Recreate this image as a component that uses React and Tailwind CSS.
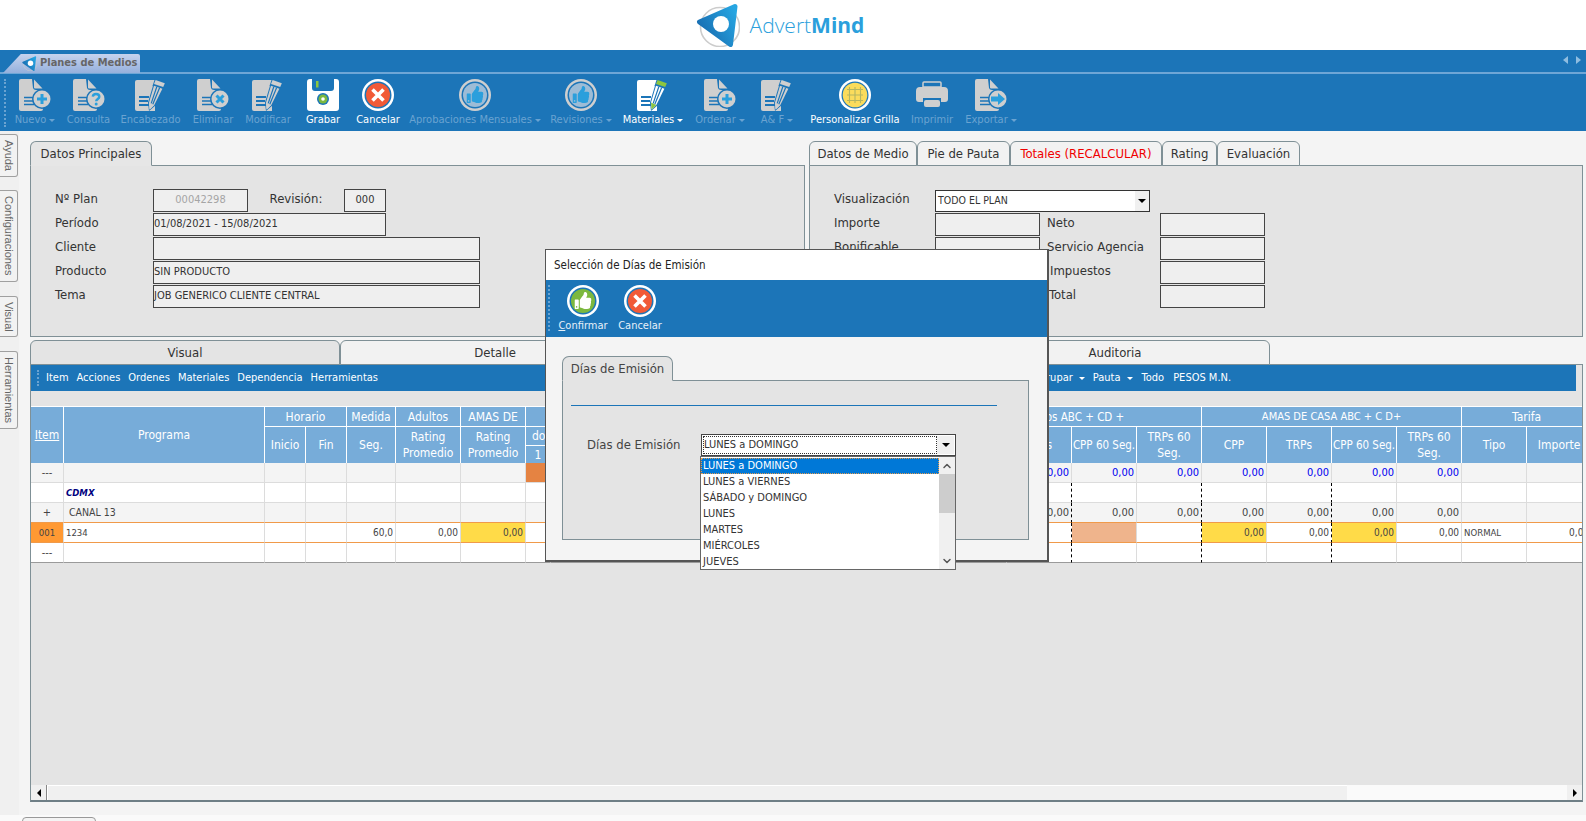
import React from "react";
import { FaThumbsUp } from "react-icons/fa";
import { ChevronUp, ChevronDown } from "lucide-react";

const BG = "#1c75b8";
const G = "#cfcfcf";
const C = "#2b9fdc";

function DocBody({ fill = G, line = BG }) {
  return (
    <>
      <path d="M2 0H13L14 9Q14.5 11 17 11L24 12V30Q24 32 22 32H2Q0 32 0 30V2Q0 0 2 0Z" fill={fill} />
      <path d="M15 0.5L23.5 9.5H16Q15 9.5 15 8.5Z" fill={fill} />
      <path d="M5 18.5H15M5 22H14M5 25.5H15" stroke={line} strokeWidth="1.6" />
    </>
  );
}
function Badge({ children }) {
  return (
    <>
      <circle cx="23" cy="20" r="10" fill={BG} />
      <circle cx="23" cy="20" r="8.5" fill={G} />
      {children}
    </>
  );
}
function DocIcon({ kind }) {
  return (
    <svg width="32" height="32" viewBox="0 0 32 32">
      <DocBody />
      {kind === "plus" && (
        <Badge>
          <path d="M23 15V25M18 20H28" stroke={C} strokeWidth="3" />
        </Badge>
      )}
      {kind === "q" && (
        <Badge>
          <path d="M19.8 17.6C20 15.8 21.3 15 23 15C25 15 26.3 16.1 26.3 17.7C26.3 19.9 23.2 20 23.2 22.3" fill="none" stroke={C} strokeWidth="2.4" />
          <circle cx="23.2" cy="25" r="1.5" fill={C} />
        </Badge>
      )}
      {kind === "x" && (
        <Badge>
          <path d="M19.5 16.5L26.5 23.5M26.5 16.5L19.5 23.5" stroke={C} strokeWidth="3" />
        </Badge>
      )}
      {kind === "arrow" && (
        <Badge>
          <path d="M16 17.5H23V14L30 20L23 26V22.5H16Z" fill={C} />
        </Badge>
      )}
    </svg>
  );
}
function PencilIcon({ white }) {
  const doc = white ? "#ffffff" : G;
  const cap = white ? "#8dc63f" : G;
  const tip = white ? "#8dc63f" : G;
  return (
    <svg width="32" height="32" viewBox="0 0 32 32">
      <path d="M2 1H20V32H2Q0 32 0 30V3Q0 1 2 1Z" fill={doc} />
      <path d="M4 18H14M4 22H13M4 26H14" stroke={BG} strokeWidth="1.8" />
      <path d="M20 -0.5L31.5 3.5L27.5 11L17.5 7Z" fill={BG} />
      <path d="M20.6 1L29.8 4.2L28.2 8L19 5Z" fill={cap} />
      <path d="M18.2 6L28.2 9.4L19.8 27L14 32L13 23.5Z" fill={BG} />
      <path d="M19 6.8L27.4 9.8L19.3 25.9L14.6 30.4L14 23.5Z" fill={white ? "#ffffff" : G} />
      <path d="M14 23.5L19.3 25.9L14.6 30.4Z" fill={tip} />
      <path d="M21.8 7.8L16.2 24.4M24.6 8.8L17.8 25.2" stroke={BG} strokeWidth="1.2" />
    </svg>
  );
}
function ThumbIcon({ green }) {
  return (
    <svg width="32" height="32" viewBox="0 0 32 32">
      <circle cx="16" cy="16" r="16" fill={green ? "#ffffff" : G} />
      <circle cx="16" cy="16" r="13.5" fill={BG} />
      <circle cx="16" cy="16" r="12" fill={green ? "#7cb83f" : "#9dbcd6"} />
      <FaThumbsUp x="7.5" y="7" size="17" color={green ? "#ffffff" : C} />
    </svg>
  );
}
function SaveIcon() {
  return (
    <svg width="32" height="32" viewBox="0 0 32 32">
      <path d="M3 0H5V9Q5 12 8 12H24Q27 12 27 9V0H29Q32 0 32 3V29Q32 32 29 32H3Q0 32 0 29V3Q0 0 3 0Z" fill="#fff" />
      <rect x="9" y="2" width="2.5" height="6.5" fill="#8dc63f" />
      <circle cx="16" cy="20" r="6" fill={BG} />
      <circle cx="16" cy="20" r="4.5" fill="#7cb83f" />
      <circle cx="16" cy="20" r="1.8" fill="#fff" />
    </svg>
  );
}
function CancelIcon() {
  return (
    <svg width="32" height="32" viewBox="0 0 32 32">
      <circle cx="16" cy="16" r="16" fill="#fff" />
      <circle cx="16" cy="16" r="13.5" fill={BG} />
      <circle cx="16" cy="16" r="12" fill="#f15a37" />
      <path d="M10.5 10.5L21.5 21.5M21.5 10.5L10.5 21.5" stroke="#fff" strokeWidth="3.6" />
    </svg>
  );
}
function GridIcon() {
  return (
    <svg width="32" height="32" viewBox="0 0 32 32">
      <circle cx="16" cy="16" r="16" fill="#fff" />
      <circle cx="16" cy="16" r="13.5" fill={BG} />
      <circle cx="16" cy="16" r="12.3" fill="#fbdc5c" />
      <path d="M8 10.5H24M8 16H24M8 21.5H24M10.5 8V24M16 8V24M21.5 8V24" stroke="#b5b662" strokeWidth="1.1" />
    </svg>
  );
}
function PrintIcon() {
  return (
    <svg width="32" height="32" viewBox="0 0 32 32">
      <path d="M7 4Q7 3 8 3H24Q25 3 25 4V8H7Z" fill="none" stroke={G} strokeWidth="1.5" />
      <path d="M4 8H28Q32 8 32 12V20Q32 23 29 23H25V19H7V23H3Q0 23 0 20V12Q0 8 4 8Z" fill={G} />
      <rect x="8" y="21" width="16" height="7" rx="2" fill={G} />
    </svg>
  );
}
function LogoMark({ size = 44, id = "lg1" }) {
  return (
    <svg width={size} height={size} viewBox="0 0 44 44">
      <defs>
        <linearGradient id={id} x1="0" y1="0.7" x2="1" y2="0.1">
          <stop offset="0" stopColor="#186cb0" />
          <stop offset="1" stopColor="#27a6e2" />
        </linearGradient>
      </defs>
      <circle cx="24" cy="24" r="19.5" fill="none" stroke="#cccccc" strokeWidth="1.6" />
      <path d="M39 3.5L3.5 19L34.5 41.5Z" fill={`url(#${id})`} stroke={`url(#${id})`} strokeWidth="5" strokeLinejoin="round" />
      <circle cx="25" cy="21" r="8" fill="#fff" />
    </svg>
  );
}

const tools = [
  { w: "w-[46px]", label: "Nuevo", caret: 1, icon: <DocIcon kind="plus" /> },
  { w: "w-[61px]", label: "Consulta", icon: <DocIcon kind="q" /> },
  { w: "w-[63px]", label: "Encabezado", icon: <PencilIcon /> },
  { w: "w-[62px]", label: "Eliminar", icon: <DocIcon kind="x" /> },
  { w: "w-[48px]", label: "Modificar", icon: <PencilIcon /> },
  { w: "w-[62px]", label: "Grabar", on: 1, icon: <SaveIcon /> },
  { w: "w-[48px]", label: "Cancelar", on: 1, icon: <CancelIcon /> },
  { w: "w-[146px]", label: "Aprobaciones Mensuales", caret: 1, icon: <ThumbIcon /> },
  { w: "w-[66px]", label: "Revisiones", caret: 1, icon: <ThumbIcon /> },
  { w: "w-[78px]", label: "Materiales", caret: 1, on: 1, icon: <PencilIcon white /> },
  { w: "w-[56px]", label: "Ordenar", caret: 1, icon: <DocIcon kind="plus" /> },
  { w: "w-[58px]", label: "A& F", caret: 1, icon: <PencilIcon /> },
  { w: "w-[98px]", label: "Personalizar Grilla", on: 1, icon: <GridIcon /> },
  { w: "w-[56px]", label: "Imprimir", icon: <PrintIcon /> },
  { w: "w-[62px]", label: "Exportar", caret: 1, icon: <DocIcon kind="arrow" /> },
];

function Caret({ className }) {
  return <span className={"inline-block border-x-[3px] border-t-[3px] border-x-transparent align-middle " + className} />;
}

function ToolBtn({ t }) {
  return (
    <div className={"flex flex-col items-center shrink-0 " + t.w}>
      {t.icon}
      <div className={"mt-[2px] whitespace-nowrap text-[11px] leading-[14px] flex items-center gap-[3px] " + (t.on ? "text-white" : "text-[#6aa3d1]")}>
        {t.label}
        {t.caret ? <Caret className={t.on ? "border-t-white" : "border-t-[#6aa3d1]"} /> : null}
      </div>
    </div>
  );
}

function Box({ w, children, center, grey }) {
  return (
    <div className={"h-[23px] shrink-0 border border-[#444] bg-[#efefef] flex items-center text-[11px] pb-px whitespace-nowrap " + w + (center ? " justify-center" : "") + (grey ? " text-[#a5a5a5]" : " text-[#333]")}>
      {children}
    </div>
  );
}
function Row({ label, children, lw = "w-[98px]" }) {
  return (
    <div className="flex items-center h-[23px] mb-px text-[13px] text-[#333]">
      {label !== undefined && <div className={"shrink-0 pb-[3px] " + lw}>{label}</div>}
      {children}
    </div>
  );
}
function TopTab({ children, w, active, red }) {
  return (
    <div className={"h-[25px] pt-px -mb-px border border-[#7f9096] rounded-t-[6px] flex items-center justify-center text-[13px] whitespace-nowrap shrink-0 relative " + w + " " + (active ? "bg-[#e6e6e6] border-b-[#e6e6e6] " : "bg-[#f2f2f2] ") + (red ? "text-[#f00000]" : "text-[#333]")}>
      {children}
    </div>
  );
}
function SideTab({ children, h, mt }) {
  return (
    <div className={"w-[18px] border border-l-0 border-[#a0a0a0] rounded-r-[3px] bg-[#f2f2f2] flex items-center justify-center " + h + " " + mt}>
      <span className="[writing-mode:vertical-rl] font-['Liberation_Sans',sans-serif] text-[11px] text-[#666]">{children}</span>
    </div>
  );
}

const th = "bg-[#77acd9] text-white font-normal text-[12px] leading-[16px] border-r border-t border-white text-center p-0 overflow-hidden";

function Td({ bg = "bg-white", border = "border-b-[#dcdcdc]", right, dash, children, cls = "" }) {
  return (
    <td className={"h-[20px] p-0 px-[2px] border-b border-r leading-none whitespace-nowrap overflow-hidden " + bg + " " + border + " " + (dash ? "border-r-black [border-right-style:dashed] " : "border-r-[#dcdcdc] ") + (right ? "text-right " : "") + cls}>
      {children}
    </td>
  );
}

const COLS = [33, 201, 41, 41, 49, 65, 65, 25, 391, 65, 65, 65, 65, 65, 65, 65, 65, 65, 65];
const DASH = new Set([10, 12, 14]);
function rowCells(over = {}, opts = {}) {
  return COLS.map((_, i) => {
    const o = over[i] || {};
    const dash = opts.dash && DASH.has(i);
    return (
      <Td key={i} bg={o.bg || opts.bg} border={opts.border} right={o.right} dash={dash} cls={o.cls || "text-[11px]"}>
        {o.t}
      </Td>
    );
  });
}
function zeroes(idx, extra = {}) {
  const o = {};
  idx.forEach((i) => (o[i] = { t: "0,00", right: 1, ...extra }));
  return o;
}

function Table() {
  const zb = zeroes([10, 11, 12, 13, 14, 15, 16], { cls: "text-[11px] text-[#0000f0]" });
  const zd = zeroes([10, 11, 12, 13, 14, 15, 16], { cls: "text-[11px] text-[#444]" });
  const z4 = zeroes([14, 16], { cls: "text-[10px] text-[#444]" });
  const small = "text-[10px]";
  return (
    <table className="table-fixed border-separate border-spacing-0 w-[1561px] text-[#444]">
      <colgroup>
        {COLS.map((c, i) => (
          <col key={i} style={{ width: c }} />
        ))}
      </colgroup>
      <thead>
        <tr className="h-[20px]">
          <th rowSpan={3} className={th}><span className="underline">Item</span></th>
          <th rowSpan={3} className={th}>Programa</th>
          <th colSpan={2} className={th}>Horario</th>
          <th className={th}>Medida</th>
          <th className={th}>Adultos</th>
          <th className={th + " whitespace-nowrap"}>AMAS DE</th>
          <th colSpan={2} className={th}></th>
          <th colSpan={4} className={th + " !text-[11.5px]"}>Adultos ABC + CD +</th>
          <th colSpan={4} className={th + " !text-[11px]"}>AMAS DE CASA ABC + C D+</th>
          <th colSpan={2} className={th}>Tarifa</th>
        </tr>
        <tr className="h-[19px]">
          <th rowSpan={2} className={th}>Inicio</th>
          <th rowSpan={2} className={th}>Fin</th>
          <th rowSpan={2} className={th}>Seg.</th>
          <th rowSpan={2} className={th}>Rating Promedio</th>
          <th rowSpan={2} className={th}>Rating Promedio</th>
          <th colSpan={2} className={th + " !text-left pl-[6px]"}>do</th>
          {["CPP", "TRPs", "CPP 60 Seg.", "TRPs 60 Seg.", "CPP", "TRPs", "CPP 60 Seg.", "TRPs 60 Seg."].map((h, i) => (
            <th key={i} rowSpan={2} className={th + (h.startsWith("CPP 60") ? " whitespace-nowrap !text-[11.5px]" : "")}>{h}</th>
          ))}
          <th rowSpan={2} className={th}>Tipo</th>
          <th rowSpan={2} className={th}>Importe</th>
        </tr>
        <tr className="h-[18px]">
          <th className={th}>1</th>
          <th className={th}></th>
        </tr>
      </thead>
      <tbody>
        <tr>{rowCells({ 0: { t: "---", cls: "text-[11px] text-center" }, 7: { bg: "bg-[#e58342]" }, ...zb }, { bg: "bg-[#f4f4f4]" })}</tr>
        <tr>{rowCells({ 1: { t: "CDMX", cls: "italic text-[#000080] font-semibold text-[9.5px]" } }, { dash: 1 })}</tr>
        <tr>{rowCells({ 0: { t: "+", cls: "text-[11px] text-center" }, 1: { t: "CANAL 13", cls: "pl-[5px] text-[10.5px]" }, ...zd }, { dash: 1, bg: "bg-[#f4f4f4]", border: "border-b-[#f09a4a]" })}</tr>
        <tr>
          {rowCells(
            {
              0: { t: "001", bg: "bg-[#ff9933]", cls: "text-center text-[9.5px]" },
              1: { t: "1234", cls: "text-[9.5px]" },
              4: { t: "60,0", right: 1, cls: small },
              5: { t: "0,00", right: 1, cls: small },
              6: { t: "0,00", right: 1, bg: "bg-[#ffdb48]", cls: small },
              11: { bg: "bg-[#efb48c]" },
              ...z4,
              13: { t: "0,00", right: 1, bg: "bg-[#ffdb48]", cls: small },
              15: { t: "0,00", right: 1, bg: "bg-[#ffdb48]", cls: small },
              17: { t: "NORMAL", cls: "text-[9.5px]" },
              18: { t: "0,00", right: 1, cls: small },
            },
            { dash: 1, border: "border-b-[#f09a4a]" }
          )}
        </tr>
        <tr>{rowCells({ 0: { t: "---", cls: "text-[11px] text-center" } }, { dash: 1, border: "border-b-[#9a9a9a]" })}</tr>
      </tbody>
    </table>
  );
}

function Dialog() {
  const items = ["LUNES a DOMINGO", "LUNES a VIERNES", "SÁBADO y DOMINGO", "LUNES", "MARTES", "MIÉRCOLES", "JUEVES"];
  return (
    <div className="absolute left-[545px] top-[249px] w-[504px] h-[313px] border border-[#555] border-b-2 border-r-2 bg-[#f4f4f4] flex flex-col">
      <div className="h-[30px] pt-[2px] bg-white flex items-center pl-[8px] text-[11.5px] text-[#222]">Selección de Días de Emisión</div>
      <div className="h-[57px] bg-[#1c75b8] flex relative pl-[2px] pt-[5px]">
        <div className="w-0 h-[46px] border-l-2 border-dotted border-[#6aa3d1] mr-[3px]" />
        <div className="flex flex-col items-center w-[60px]">
          <ThumbIcon green />
          <div className="mt-[2px] text-[11px] leading-[14px] text-[#e6f0f8]"><span className="underline">C</span>onfirmar</div>
        </div>
        <div className="flex flex-col items-center w-[56px] ml-[-1px]">
          <CancelIcon />
          <div className="mt-[2px] text-[11px] leading-[14px] text-[#e6f0f8]">Cancelar</div>
        </div>
      </div>
      <div className="pl-[16px] pt-[19px]">
        <div className="w-[111px] h-[25px] pt-px -mb-px relative border border-[#7f9096] border-b-[#e4e4e4] rounded-t-[7px] bg-[#e4e4e4] flex items-center justify-center text-[13px] text-[#444]">Días de Emisión</div>
        <div className="w-[467px] h-[160px] border border-[#7f9096] bg-[#e4e4e4] pt-[24px] pl-[8px]">
          <div className="w-[426px] h-px bg-[#1c75b8]" />
          <div className="flex mt-[28px] ml-[16px] text-[13px] text-[#444] items-center">
            <div className="w-[114px] shrink-0">Días de Emisión</div>
            <div className="w-[255px] h-[22px] border border-[#444] bg-white flex p-px">
              <div className="flex-1 border border-dotted border-[#333] flex items-center text-[11px] text-[#333]">LUNES a DOMINGO</div>
              <div className="w-[17px] bg-[#f0f0f0] flex items-center justify-center"><Caret className="border-t-black !border-x-[4px] !border-t-[4px]" /></div>
            </div>
          </div>
        </div>
      </div>
      <div className="absolute left-[154px] top-[206px] w-[256px] h-[114px] bg-white border border-[#666] flex">
        <div className="flex-1 pt-px">
          {items.map((it, i) => (
            <div key={it} className={"h-[16px] flex items-center pl-[2px] text-[11px] " + (i === 0 ? "bg-[#0078d7] text-white outline outline-1 -outline-offset-1 outline-dotted outline-[#e09a50]" : "text-[#333]")}>{it}</div>
          ))}
        </div>
        <div className="w-[16px] bg-[#f0f0f0] flex flex-col">
          <div className="h-[17px] flex items-center justify-center"><ChevronUp size={12} strokeWidth={3} color="#555" /></div>
          <div className="h-[39px] bg-[#cdcdcd]" />
          <div className="flex-1" />
          <div className="h-[17px] flex items-center justify-center"><ChevronDown size={12} strokeWidth={3} color="#555" /></div>
        </div>
      </div>
    </div>
  );
}

export default function App() {
  return (
    <div className="relative h-screen w-full overflow-hidden bg-[#f4f4f4] flex flex-col font-['DejaVu_Sans_Condensed','DejaVu_Sans',sans-serif]">
      <header className="h-[50px] bg-white flex items-center justify-center shrink-0 pr-[26px] gap-[10px]">
        <LogoMark />
        <div className="text-[#2b9fdc] text-[21px] font-['Open_Sans',sans-serif] font-light leading-none">
          Advert<span className="font-bold">Mind</span>
        </div>
      </header>

      <div className="h-[81px] bg-[#1c75b8] shrink-0 flex flex-col">
        <div className="h-[24px] border-b-2 border-[#6ea6d6] flex items-end justify-between">
          <div className="relative ml-[3px] h-[19px] w-[137px] flex items-center -mb-px">
            <div className="absolute inset-0 bg-gradient-to-b from-[#c6d3ee] to-[#95b0dc] [clip-path:polygon(0_100%,13%_0,100%_0,100%_100%)] rounded-tr-[2px]" />
            <div className="relative ml-[19px] flex items-center gap-[3px]">
              <LogoMark size={15} id="lg2" />
              <span className="text-[11px] font-bold text-[#666] whitespace-nowrap">Planes de Medios</span>
            </div>
          </div>
          <div className="flex gap-[8px] pr-[5px] pb-[8px]">
            <span className="border-y-[4px] border-r-[5px] border-y-transparent border-r-[#8fbde0]" />
            <span className="border-y-[4px] border-l-[5px] border-y-transparent border-l-[#8fbde0]" />
          </div>
        </div>
        <div className="flex pt-[5px] pl-[4px]">
          <div className="w-0 h-[48px] border-l-2 border-dotted border-[#6aa3d1] mr-[6px]" />
          <div className="flex">
            {tools.map((t) => (
              <ToolBtn key={t.label} t={t} />
            ))}
          </div>
        </div>
      </div>

      <div className="flex flex-1 min-h-0">
        <div className="w-[19px] shrink-0 bg-[#f0f0f0] flex flex-col">
          <SideTab h="h-[43px]" mt="mt-[3px]">Ayuda</SideTab>
          <SideTab h="h-[92px]" mt="mt-[13px]">Configuraciones</SideTab>
          <SideTab h="h-[41px]" mt="mt-[14px]">Visual</SideTab>
          <SideTab h="h-[78px]" mt="mt-[14px]">Herramientas</SideTab>
        </div>

        <div className="flex-1 min-w-0 pl-[11px] pr-[3px] pt-[10px] flex flex-col">
          <div className="flex gap-[4px] shrink-0">
            <div className="w-[775px] flex flex-col">
              <div className="flex"><TopTab w="w-[122px]" active>Datos Principales</TopTab></div>
              <div className="h-[172px] border border-[#7f9096] bg-[#e4e4e4] pl-[24px] pt-[23px]">
                <Row label="Nº Plan">
                  <Box w="w-[95px]" center grey>00042298</Box>
                  <div className="w-[96px] text-center pb-[3px]">Revisión:</div>
                  <Box w="w-[42px]" center>000</Box>
                </Row>
                <Row label="Período"><Box w="w-[233px]">01/08/2021 - 15/08/2021</Box></Row>
                <Row label="Cliente"><Box w="w-[327px]" /></Row>
                <Row label="Producto"><Box w="w-[327px]">SIN PRODUCTO</Box></Row>
                <Row label="Tema"><Box w="w-[327px]">JOB GENERICO CLIENTE CENTRAL</Box></Row>
              </div>
            </div>
            <div className="flex-1 flex flex-col min-w-0">
              <div className="flex">
                <TopTab w="w-[108px]">Datos de Medio</TopTab>
                <TopTab w="w-[93px]">Pie de Pauta</TopTab>
                <TopTab w="w-[152px]" red>Totales (RECALCULAR)</TopTab>
                <TopTab w="w-[55px]">Rating</TopTab>
                <TopTab w="w-[83px]">Evaluación</TopTab>
              </div>
              <div className="h-[172px] border border-[#7f9096] bg-[#e4e4e4] pl-[24px] pt-[23px]">
                <Row label="Visualización" lw="w-[101px]">
                  <div className="h-[22px] mt-[1px] w-[215px] border border-[#333] bg-white flex items-center pl-[2px] text-[10.5px] text-[#333]">
                    <span className="flex-1">TODO EL PLAN</span>
                    <span className="w-[14px] h-full bg-[#f0f0f0] flex items-center justify-center"><Caret className="border-t-black !border-x-[4px] !border-t-[4px]" /></span>
                  </div>
                </Row>
                {[["Importe", "Neto", ""], ["Bonificable", "Servicio Agencia", ""], ["", "Impuestos", "ml-[3px]"], ["", "Total", "ml-[2px]"]].map(([a, b, c]) => (
                  <Row key={b} label={a} lw="w-[101px]">
                    <Box w="w-[105px]" />
                    <div className="w-[120px] pl-[7px] pb-[3px] whitespace-nowrap"><span className={"inline-block " + c}>{b}</span></div>
                    <Box w="w-[105px]" />
                  </Row>
                ))}
              </div>
            </div>
          </div>

          <div className="flex mt-[3px] shrink-0">
            <TopTab w="w-[310px] !bg-[#e4e4e4]">Visual</TopTab>
            <TopTab w="w-[310px]">Detalle</TopTab>
            <TopTab w="w-[310px]"></TopTab>
            <TopTab w="w-[310px]">Auditoria</TopTab>
          </div>
          <div className="h-[438px] border border-[#7f9096] border-b-2 border-b-[#6f7f86] bg-[#e4e4e4] flex flex-col overflow-hidden shrink-0">
            <div className="h-[26px] w-[1545px] shrink-0 bg-[#1c75b8] flex items-center text-white text-[11px] whitespace-nowrap pl-[6px]">
              <div className="w-0 h-[16px] border-l-2 border-dotted border-[#6aa3d1] mr-[7px]" />
              <div className="flex gap-[8px]">
                <span>Item</span><span>Acciones</span><span>Ordenes</span><span>Materiales</span><span>Dependencia</span><span>Herramientas</span>
              </div>
              <div className="flex items-center ml-[655px]">
                <span>Agrupar</span>
                <Caret className="border-t-white ml-[6px] mr-[8px]" />
                <span>Pauta</span>
                <Caret className="border-t-white mx-[6px]" />
                <span className="ml-[3px]">Todo</span>
                <span className="ml-[9px]">PESOS M.N.</span>
              </div>
            </div>
            <div className="flex-1 min-h-0 overflow-hidden pt-[15px]">
              <Table />
            </div>
            <div className="h-[15px] shrink-0 flex bg-[#fafafa]">
              <div className="w-[16px] bg-[#f0f0f0] border-r border-[#888] flex items-center justify-center">
                <span className="border-y-[4px] border-r-[4px] border-y-transparent border-r-black" />
              </div>
              <div className="w-[1300px] bg-[#f0f0f0] border-l border-white border-t" />
              <div className="flex-1" />
              <div className="w-[15px] bg-[#f0f0f0] flex items-center justify-center">
                <span className="border-y-[4px] border-l-[4px] border-y-transparent border-l-black" />
              </div>
            </div>
          </div>
        </div>
      </div>

      <div className="absolute left-0 right-0 bottom-0 h-[6px] bg-[#fafafa]">
        <div className="ml-[22px] mt-[2px] w-[74px] h-[6px] border border-[#999] rounded-t-[4px] bg-[#f4f4f4]" />
      </div>
      <Dialog />
    </div>
  );
}
